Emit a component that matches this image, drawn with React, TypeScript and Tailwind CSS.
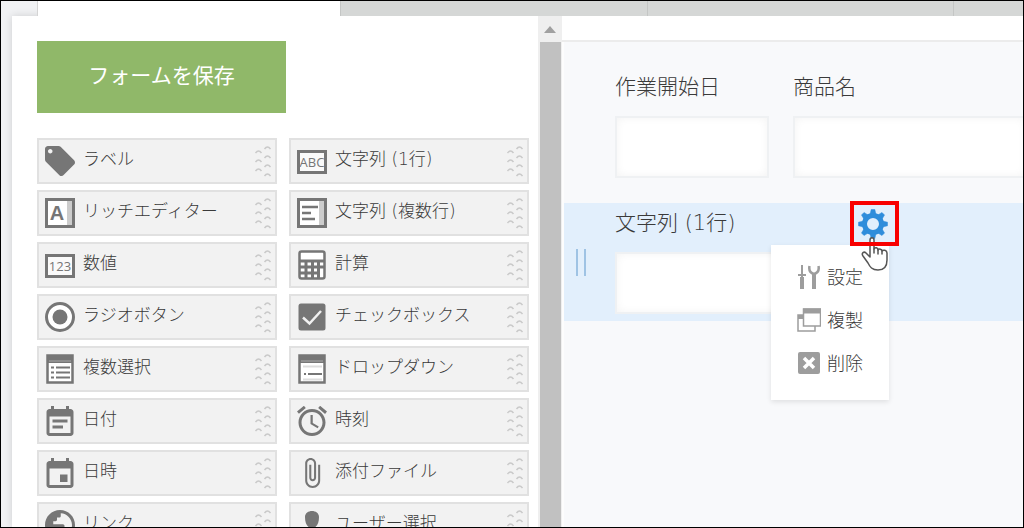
import { ReactNode } from 'react';

const Material = ({ d, viewBox = '2 2 20 20' }: { d: string; viewBox?: string }) => (
  <svg className="w-[30px] h-[30px]" viewBox={viewBox} fill="currentColor">
    <path d={d} />
  </svg>
);

const Drawn = ({ children }: { children: ReactNode }) => (
  <svg className="w-[30px] h-[30px]" viewBox="0 0 30 30" fill="none" stroke="currentColor" strokeWidth={2}>
    {children}
  </svg>
);

const BoxedText = ({ text }: { text: string }) => (
  <Drawn>
    <rect x="1.5" y="5.5" width="27" height="21" fill="#fafafa" strokeWidth={3} />
    <text
      x="15"
      y="21"
      textAnchor="middle"
      fontSize="13"
      fontWeight="400"
      fontFamily="'Open Sans', sans-serif"
      fill="currentColor"
      stroke="none"
    >
      {text}
    </text>
  </Drawn>
);

const LABEL =
  'M21.41 11.58l-9-9C12.05 2.22 11.55 2 11 2H4c-1.1 0-2 .9-2 2v7c0 .55.22 1.05.59 1.42l9 9c.36.36.86.58 1.41.58.55 0 1.05-.22 1.41-.59l7-7c.37-.36.59-.86.59-1.41 0-.55-.23-1.06-.59-1.42zM5.5 7C4.67 7 4 6.33 4 5.5S4.67 4 5.5 4 7 4.67 7 5.5 6.33 7 5.5 7z';
const EVENT_NOTE =
  'M17 10H7v2h10v-2zm2-7h-1V1h-2v2H8V1H6v2H5c-1.11 0-1.99.9-1.99 2L3 19c0 1.1.89 2 2 2h14c1.1 0 2-.9 2-2V5c0-1.1-.9-2-2-2zm0 16H5V8h14v11zm-5-5H7v2h7v-2z';
const EVENT =
  'M17 12h-5v5h5v-5zM16 1v2H8V1H6v2H5c-1.11 0-1.99.9-1.99 2L3 19c0 1.1.89 2 2 2h14c1.1 0 2-.9 2-2V5c0-1.1-.9-2-2-2h-1V1h-2zm3 18H5V8h14v11z';
const ALARM =
  'M22 5.72l-4.6-3.86-1.29 1.53 4.6 3.86L22 5.72zM7.88 3.39L6.6 1.86 2 5.71l1.29 1.53 4.59-3.85zM12.5 8H11v6l4.75 2.85.75-1.23-4-2.37V8zM12 4c-4.97 0-9 4.03-9 9s4.02 9 9 9c4.97 0 9-4.03 9-9s-4.03-9-9-9zm0 16c-3.87 0-7-3.13-7-7s3.13-7 7-7 7 3.13 7 7-3.13 7-7 7z';
const GLOBE =
  'M12 2C6.48 2 2 6.48 2 12s4.48 10 10 10 10-4.48 10-10S17.52 2 12 2z M12.5 4.1V6c0 .7-.5 1-1 1H10v1.500c0 .5-.4 1-1 1H7.500v2H14c.5 0 1 .5 1 1v3h1c.9 0 1.600.6 1.900 1.400C19.200 15.900 20 14 20 12c0-4.200-3.300-7.700-7.500-7.900z';
const CLIP =
  'M16.5 6v11.5c0 2.21-1.79 4-4 4s-4-1.79-4-4V5c0-1.38 1.12-2.5 2.5-2.5s2.5 1.12 2.5 2.5v10.5c0 .55-.45 1-1 1s-1-.45-1-1V6H10v9.5c0 1.38 1.12 2.5 2.5 2.5s2.5-1.12 2.5-2.5V5c0-2.21-1.79-4-4-4S7 2.79 7 5v12.5c0 3.04 2.46 5.5 5.5 5.5s5.5-2.46 5.5-5.5V6h-1.5z';

const PARTS: { name: string; icon: ReactNode }[] = [
  { name: 'ラベル', icon: <Material d={LABEL} /> },
  { name: '文字列 (1行)', icon: <BoxedText text="ABC" /> },
  {
    name: 'リッチエディター',
    icon: (
      <Drawn>
        <rect x="1.5" y="1.5" width="27" height="27" fill="#fff" strokeWidth={3} />
        <path d="M24.5 3v24" stroke="#ccc" strokeWidth={5} />
        <text
          x="12"
          y="22"
          textAnchor="middle"
          fontSize="20"
          fontWeight="700"
          fontFamily="'Liberation Sans', sans-serif"
          fill="currentColor"
          stroke="none"
        >
          A
        </text>
      </Drawn>
    ),
  },
  {
    name: '文字列 (複数行)',
    icon: (
      <Drawn>
        <rect x="1.5" y="1.5" width="27" height="27" fill="#fff" strokeWidth={3} />
        <path d="M24.5 3v24" stroke="#ccc" strokeWidth={5} />
        <path d="M5 9h16M5 15h9M5 21h13" strokeWidth={2.5} />
      </Drawn>
    ),
  },
  { name: '数値', icon: <BoxedText text="123" /> },
  {
    name: '計算',
    icon: (
      <Drawn>
        <rect x="2.5" y="1.5" width="25" height="27" rx="2" fill="#fff" strokeWidth={2.5} />
        <path d="M2 11h26" strokeWidth={3} />
        <path d="M3 17h24M3 23h19M9 11v17M15.5 11v17M21.5 11v17" strokeWidth={3} />
      </Drawn>
    ),
  },
  {
    name: 'ラジオボタン',
    icon: (
      <Drawn>
        <circle cx="15" cy="15" r="13.5" fill="#fff" strokeWidth={3} />
        <circle cx="15" cy="15" r="7.5" fill="currentColor" stroke="none" />
      </Drawn>
    ),
  },
  {
    name: 'チェックボックス',
    icon: (
      <Drawn>
        <rect x="1.5" y="1.5" width="27" height="27" rx="2.5" fill="currentColor" stroke="none" />
        <path d="M6 15.5l6.5 6L24 9" stroke="#f0f0f0" strokeWidth={2.5} />
      </Drawn>
    ),
  },
  {
    name: '複数選択',
    icon: (
      <Drawn>
        <rect x="2.5" y="1.5" width="25" height="27" fill="#fff" strokeWidth={2.5} />
        <path d="M2 5h26" strokeWidth={8} />
        <path d="M4 7h22" stroke="#aaa" strokeWidth={1} />
        <path d="M6 13.5h3M11 13.5h14M6 18.5h3M11 18.5h14M6 23.5h3M11 23.5h14" />
      </Drawn>
    ),
  },
  {
    name: 'ドロップダウン',
    icon: (
      <Drawn>
        <rect x="2.5" y="1.5" width="25" height="27" fill="#fff" strokeWidth={2.5} />
        <path d="M2 5h26" strokeWidth={8} />
        <path d="M4 7h22" stroke="#aaa" strokeWidth={1} />
        <path d="M6 12.5h19M6 25.5h19" stroke="#ddd" />
        <path d="M7 20h2M11 20h14" />
      </Drawn>
    ),
  },
  { name: '日付', icon: <Material d={EVENT_NOTE} viewBox="2 1 20 20" /> },
  { name: '時刻', icon: <Material d={ALARM} viewBox="2 2 20 20" /> },
  { name: '日時', icon: <Material d={EVENT} viewBox="2 1 20 20" /> },
  { name: '添付ファイル', icon: <Material d={CLIP} viewBox="1 1 22 22" /> },
  {
    name: 'リンク',
    icon: (
      <svg className="w-[30px] h-[30px]" viewBox="2 2 20 20" fill="currentColor" fillRule="evenodd">
        <path d={GLOBE} />
      </svg>
    ),
  },
  {
    name: 'ユーザー選択',
    icon: (
      <Drawn>
        <path d="M8 7c0-8 14-8 14 0 0 6-2 11-7 11S8 13 8 7zM3 30c0-8 5-10 12-10s12 2 12 10z" fill="currentColor" stroke="none" />
      </Drawn>
    ),
  },
];

const Grip = () => (
  <svg className="w-4 h-8 text-[#cacaca]" viewBox="0 0 16 32" fill="none" stroke="currentColor" strokeWidth={1.5}>
    {[8, 17, 26].map((y) => (
      <path key={y} d={`M0.5 ${y}q3-4 6 0`} />
    ))}
    {[4, 13, 22, 31].map((y) => (
      <path key={y} d={`M9.5 ${y}q3-4 6 0`} />
    ))}
  </svg>
);

const Gear = () => (
  <svg className="w-[30px] h-[30px]" viewBox="0 0 30 30" fill="none" stroke="#2f8ddb">
    <circle cx="15" cy="15" r="8.5" strokeWidth={5} />
    {[0, 45, 90, 135, 180, 225, 270, 315].map((deg) => (
      <path key={deg} d="M12 5.5L13.2 0.5h3.600l1.200 5z" fill="#2f8ddb" strokeWidth={0.5} transform={`rotate(${deg} 15 15)`} />
    ))}
  </svg>
);

const Pointer = () => (
  <svg className="w-7 h-9" viewBox="0 0 28 36" fill="#fff" stroke="#555" strokeWidth={1.5} strokeLinejoin="round" strokeLinecap="round">
    <path d="M9 21V4c0-3 4-3 4 0v9c1-2 4-1.5 4 1 1-1.5 4-1 4 1 1-1.5 5-1 5 2v7c0 7-4 10-9 10-6 0-8-3-10-7l-5-7c-2-3 1-5 3-3z" />
    <path d="M13 13v4M17 14v4M21 15v3" fill="none" />
  </svg>
);

const MENU: { name: string; icon: ReactNode }[] = [
  {
    name: '設定',
    icon: (
      <svg className="w-6 h-6" viewBox="0 0 24 24" fill="none" stroke="currentColor">
        <path d="M5 0v12M1 10h8" strokeWidth={2} />
        <path d="M5 12v12" strokeWidth={4} />
        <path d="M12.5 1c-1 5 1 7 4.5 8 3.5-1 5.5-3 4.5-8" strokeWidth={2.5} />
        <path d="M17 8v16" strokeWidth={4} />
      </svg>
    ),
  },
  {
    name: '複製',
    icon: (
      <svg className="w-6 h-6" viewBox="0 0 24 24" fill="none" stroke="currentColor" strokeWidth={1.5}>
        <path d="M6 7H1v16h17v-5" />
        <path d="M1 9h5" strokeWidth={4} />
        <rect x="6.5" y="1" width="17" height="17" fill="#fff" />
        <path d="M6 3h18" strokeWidth={5} />
      </svg>
    ),
  },
  {
    name: '削除',
    icon: (
      <svg className="w-6 h-6" viewBox="0 0 24 24" fill="none" stroke="currentColor">
        <rect x="1" y="1" width="22" height="22" rx="2" fill="currentColor" stroke="none" />
        <path d="M7 7l10 10M17 7L7 17" stroke="#fff" strokeWidth={3.5} />
      </svg>
    ),
  },
];

const INPUT =
  'block w-full h-[62px] border-2 border-[#eff1f3] bg-white px-3 text-[21px] shadow-[inset_0_0_8px_#f3f3f3] outline-none';

export default function App() {
  return (
    <div className="flex flex-col h-screen overflow-hidden border border-black bg-[#f1f2f4] font-['DejaVu_Sans','Noto_Sans_CJK_JP',sans-serif] font-light text-[#3a3a3a]">
      {/* Tab strip */}
      <nav className="relative z-10 flex h-[15px] shrink-0 pl-9">
        <div className="w-[303px] shrink-0 border-l border-[#d4d4d4] bg-white" />
        <div className="w-[307px] shrink-0 border-l border-[#c4c6c5] bg-[#d5d7d6]" />
        <div className="w-[306px] shrink-0 border-l border-[#c4c6c5] bg-[#d5d7d6]" />
        <div className="flex-1 border-l border-[#c4c6c5] bg-[#d5d7d6]" />
      </nav>

      <div className="ml-[11px] flex min-h-0 flex-1 bg-white shadow-[0_0_8px_rgba(0,0,0,0.15)]">
        {/* Parts palette */}
        <aside className="flex w-[550px] shrink-0">
          <div className="flex-1 overflow-hidden pt-[25px] pr-[9px] pl-[25px]">
            <button type="button" className="h-[72px] w-[249px] bg-[#90b869] text-[21px] font-normal text-white">
              フォームを保存
            </button>
            <div className="mt-[25px] grid grid-cols-2 gap-x-3 gap-y-1.5">
              {PARTS.map((part) => (
                <button
                  key={part.name}
                  type="button"
                  className="flex h-[46px] items-center gap-2 border-2 border-[#e1e1e1] bg-[#f2f2f2] pr-1 pl-1.5 text-left text-[17px]"
                >
                  <span className="shrink-0 text-[#767676]">{part.icon}</span>
                  <span className="flex-1 pb-1 leading-6 whitespace-nowrap">{part.name}</span>
                  <Grip />
                </button>
              ))}
            </div>
          </div>
          {/* Scrollbar */}
          <div className="flex w-6 shrink-0 flex-col items-center bg-[#efefef]">
            <div className="flex h-[26px] items-center">
              <svg className="h-[7px] w-3" viewBox="0 0 12 7" fill="#a0a0a0">
                <path d="M6 0l6 7H0z" />
              </svg>
            </div>
            <div className="w-[21px] flex-1 bg-[#c1c1c1]" />
          </div>
        </aside>

        {/* Form canvas */}
        <main className="flex min-w-0 flex-1 flex-col">
          <div className="h-[26px] shrink-0 border-b-2 border-[#ececec]" />
          <div className="flex flex-1 flex-col gap-[18px] border-l-2 border-[#fdfdfd] bg-[#f8f9fb] pt-[25px] text-[21px]">
            <div className="flex gap-6 pt-1.5 pb-[7px] pl-[51px]">
              <div className="w-[154px] shrink-0">
                <label htmlFor="start" className="block pb-[15px] leading-7">
                  作業開始日
                </label>
                <input id="start" className={INPUT} />
              </div>
              <div className="-mr-1 flex-1">
                <label htmlFor="product" className="block pb-[15px] leading-7">
                  商品名
                </label>
                <input id="product" className={INPUT} />
              </div>
            </div>

            <div className="flex bg-[#e2effc]">
              <div className="flex w-[51px] items-center pl-3">
                <div className="h-[27px] w-[10px] border-x-2 border-[#9fc3e4]" />
              </div>
              <div className="relative w-[274px] pt-1.5 pb-[7px]">
                <div className="flex justify-between pb-[15px]">
                  <label htmlFor="text1" className="leading-7">
                    文字列 (1行)
                  </label>
                  <button type="button" aria-label="設定メニュー" className="relative mr-px h-7">
                    <Gear />
                    <span className="absolute -top-2 -left-2 z-20 h-[45px] w-[49px] border-4 border-[#f80000]" />
                    <span className="absolute top-[27px] left-[3px] z-10">
                      <Pointer />
                    </span>
                  </button>
                </div>
                <input id="text1" className={INPUT} />
                <ul className="absolute top-[42px] left-[156px] flex h-[155px] w-[118px] flex-col gap-[7px] bg-white pt-3.5 pl-[26px] shadow-[0_2px_5px_rgba(0,0,0,0.1)]">
                  {MENU.map((item) => (
                    <li key={item.name}>
                      <button type="button" className="flex h-9 items-center gap-1.5 text-[18px]">
                        <span className="text-[#9d9d9d]">{item.icon}</span>
                        {item.name}
                      </button>
                    </li>
                  ))}
                </ul>
              </div>
            </div>
          </div>
        </main>
      </div>
    </div>
  );
}
